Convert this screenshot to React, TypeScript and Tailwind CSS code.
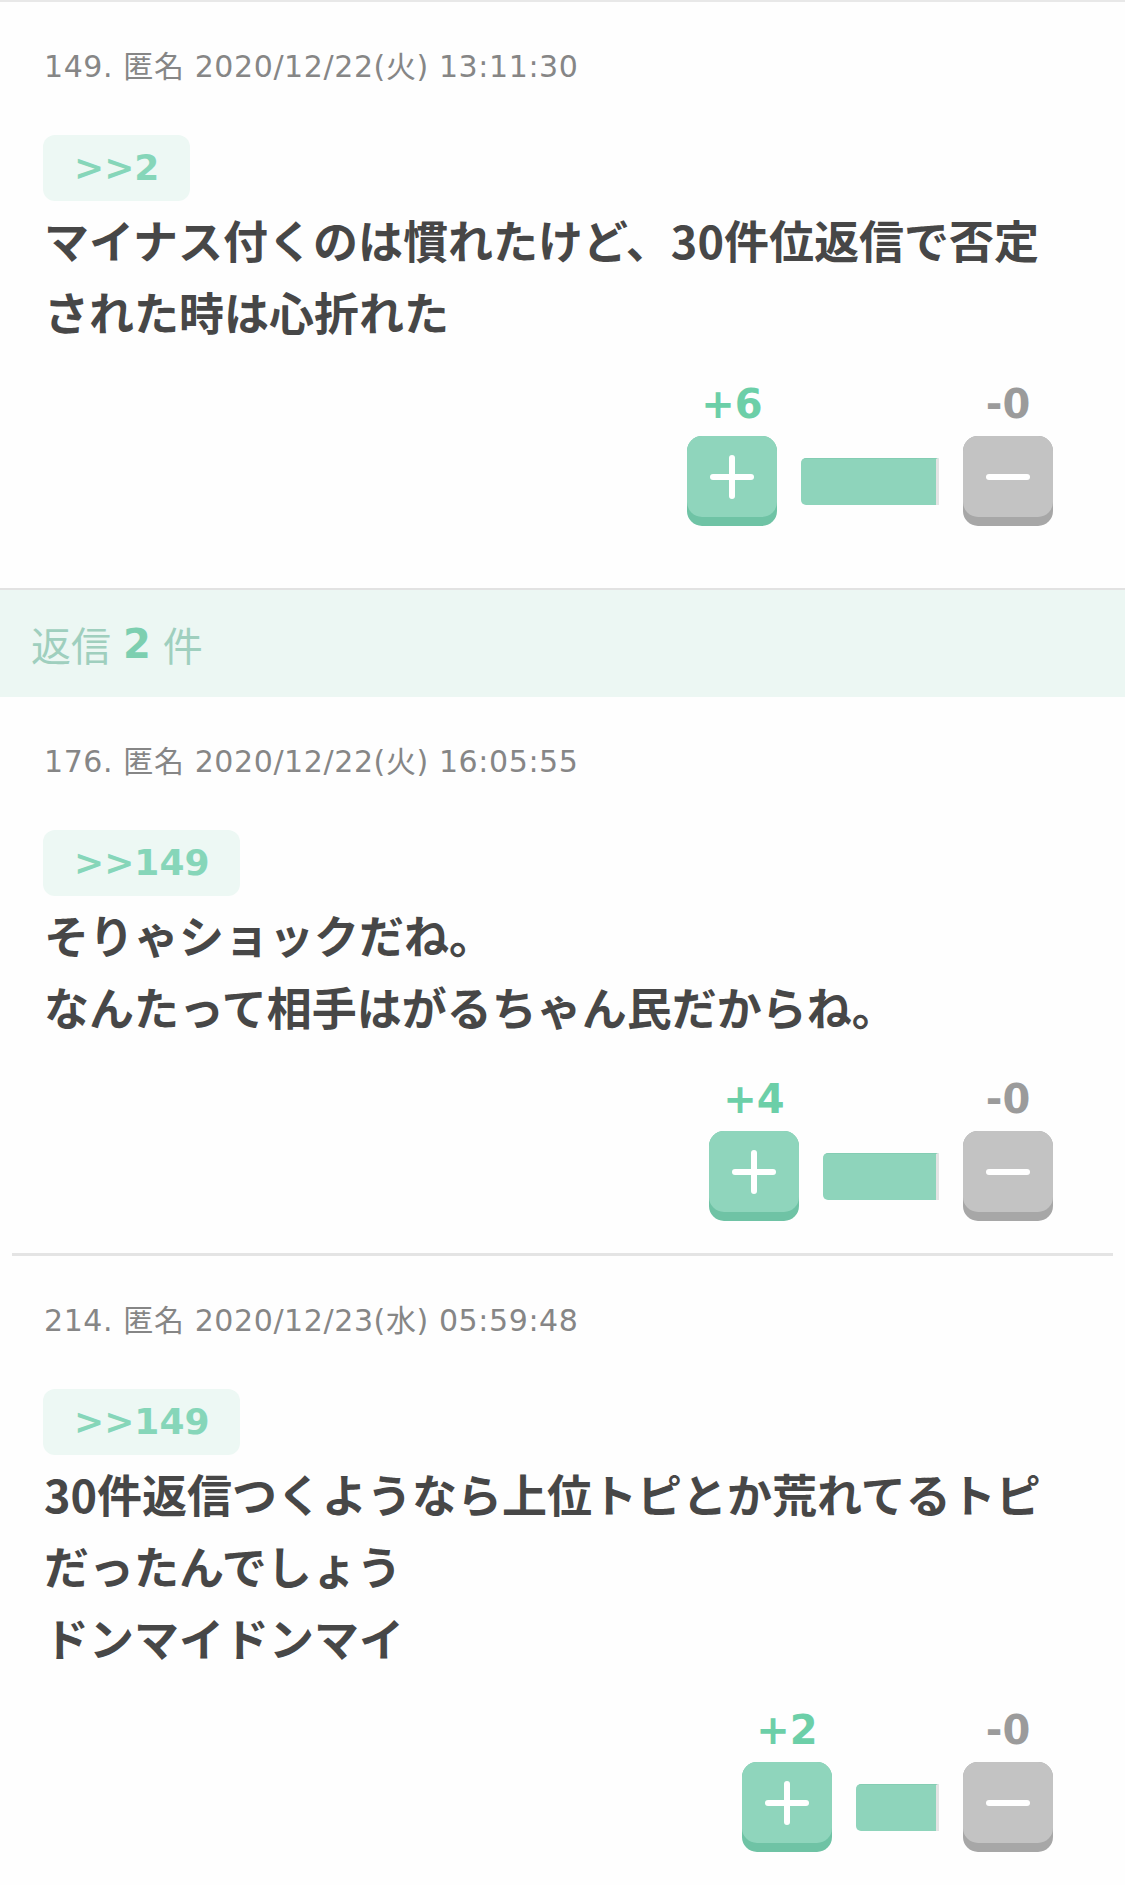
import React from "react";

type PostProps = {
  header: string;
  badge: string;
  lines: string[];
  plus: number;
  minus: number;
  barWidth: number;
  pb: "pb-[62px]" | "pb-[32px]" | "pb-[33px]";
};

const jp = { fontFamily: '"Noto Sans CJK JP", "Noto Sans", sans-serif' };
const dv = { fontFamily: '"DejaVu Sans", "Noto Sans CJK JP", sans-serif' };

function PlusIcon() {
  return (
    <svg width="44" height="44" viewBox="0 0 44 44">
      <line x1="3" y1="22" x2="41" y2="22" stroke="white" strokeWidth="6" strokeLinecap="round" />
      <line x1="22" y1="3" x2="22" y2="41" stroke="white" strokeWidth="6" strokeLinecap="round" />
    </svg>
  );
}

function MinusIcon() {
  return (
    <svg width="44" height="44" viewBox="0 0 44 44">
      <line x1="3" y1="22" x2="41" y2="22" stroke="white" strokeWidth="6" strokeLinecap="round" />
    </svg>
  );
}

function Post({ header, badge, lines, plus, minus, barWidth, pb }: PostProps) {
  return (
    <div className={`pt-[42px] ${pb}`}>
      <div
        className="pl-[44px] text-[30px] leading-[45px] tracking-[0.6px] text-[#868686]"
        style={dv}
      >
        {header}
      </div>
      <div className="mt-[46px] pl-[43px] flex">
        <div
          className="h-[66px] px-[31px] rounded-[12px] bg-[#edf8f4] flex items-center text-[36px] font-bold text-[#86d6b9]"
          style={dv}
        >
          {badge}
        </div>
      </div>
      <div className="mt-[3px] pl-[44px] text-[45px] leading-[72px] font-bold text-[#474747]" style={jp}>
        {lines.map((l, i) => (
          <div key={i} className="whitespace-nowrap">
            {l}
          </div>
        ))}
      </div>
      <div className="mt-[32px] pr-[72px] flex justify-end items-end gap-[24px]">
        <div className="flex flex-col items-center gap-[8px]">
          <div className="text-[40px] leading-[48px] font-bold text-[#6ccfa8]" style={dv}>
            +{plus}
          </div>
          <div className="w-[90px] h-[90px] rounded-[15px] bg-[#6fc3a5]">
            <div className="h-[81px] rounded-[15px] bg-[#8fd5bc] flex items-center justify-center">
              <PlusIcon />
            </div>
          </div>
        </div>
        <div
          className="mb-[21px] h-[47px] rounded-l-[5px] bg-[#8ed4bb] border-r-[3px] border-[#e4e4e4] border-t border-t-[#84cdb3]"
          style={{ width: barWidth }}
        />
        <div className="flex flex-col items-center gap-[8px]">
          <div className="text-[40px] leading-[48px] font-bold text-[#9b9b9b]" style={dv}>
            -{minus}
          </div>
          <div className="w-[90px] h-[90px] rounded-[15px] bg-[#a7a7a7]">
            <div className="h-[81px] rounded-[15px] bg-[#c3c3c3] flex items-center justify-center">
              <MinusIcon />
            </div>
          </div>
        </div>
      </div>
    </div>
  );
}

export default function App() {
  return (
    <div className="w-[1125px] min-h-[1885px] bg-[#fefefe]">
      <div className="h-[2px] bg-[#e8e8e8]" />
      <Post
        header="149. 匿名 2020/12/22(火) 13:11:30"
        badge=">>2"
        lines={["マイナス付くのは慣れたけど、30件位返信で否定", "された時は心折れた"]}
        plus={6}
        minus={0}
        barWidth={138}
        pb="pb-[62px]"
      />
      <div className="h-[2px] bg-[#e2e2e2]" />
      <div className="h-[107px] bg-[#ecf7f3] flex items-center pl-[31px] text-[40px] text-[#9fcfbe]" style={jp}>
        <span>返信</span>
        <span className="ml-[12px] font-bold text-[#7dcfb0]" style={dv}>
          2
        </span>
        <span className="ml-[12px]">件</span>
      </div>
      <Post
        header="176. 匿名 2020/12/22(火) 16:05:55"
        badge=">>149"
        lines={["そりゃショックだね。", "なんたって相手はがるちゃん民だからね。"]}
        plus={4}
        minus={0}
        barWidth={116}
        pb="pb-[32px]"
      />
      <div className="mx-[12px] h-[3px] bg-[#e4e4e4]" />
      <Post
        header="214. 匿名 2020/12/23(水) 05:59:48"
        badge=">>149"
        lines={["30件返信つくようなら上位トピとか荒れてるトピ", "だったんでしょう", "ドンマイドンマイ"]}
        plus={2}
        minus={0}
        barWidth={83}
        pb="pb-[33px]"
      />
    </div>
  );
}
